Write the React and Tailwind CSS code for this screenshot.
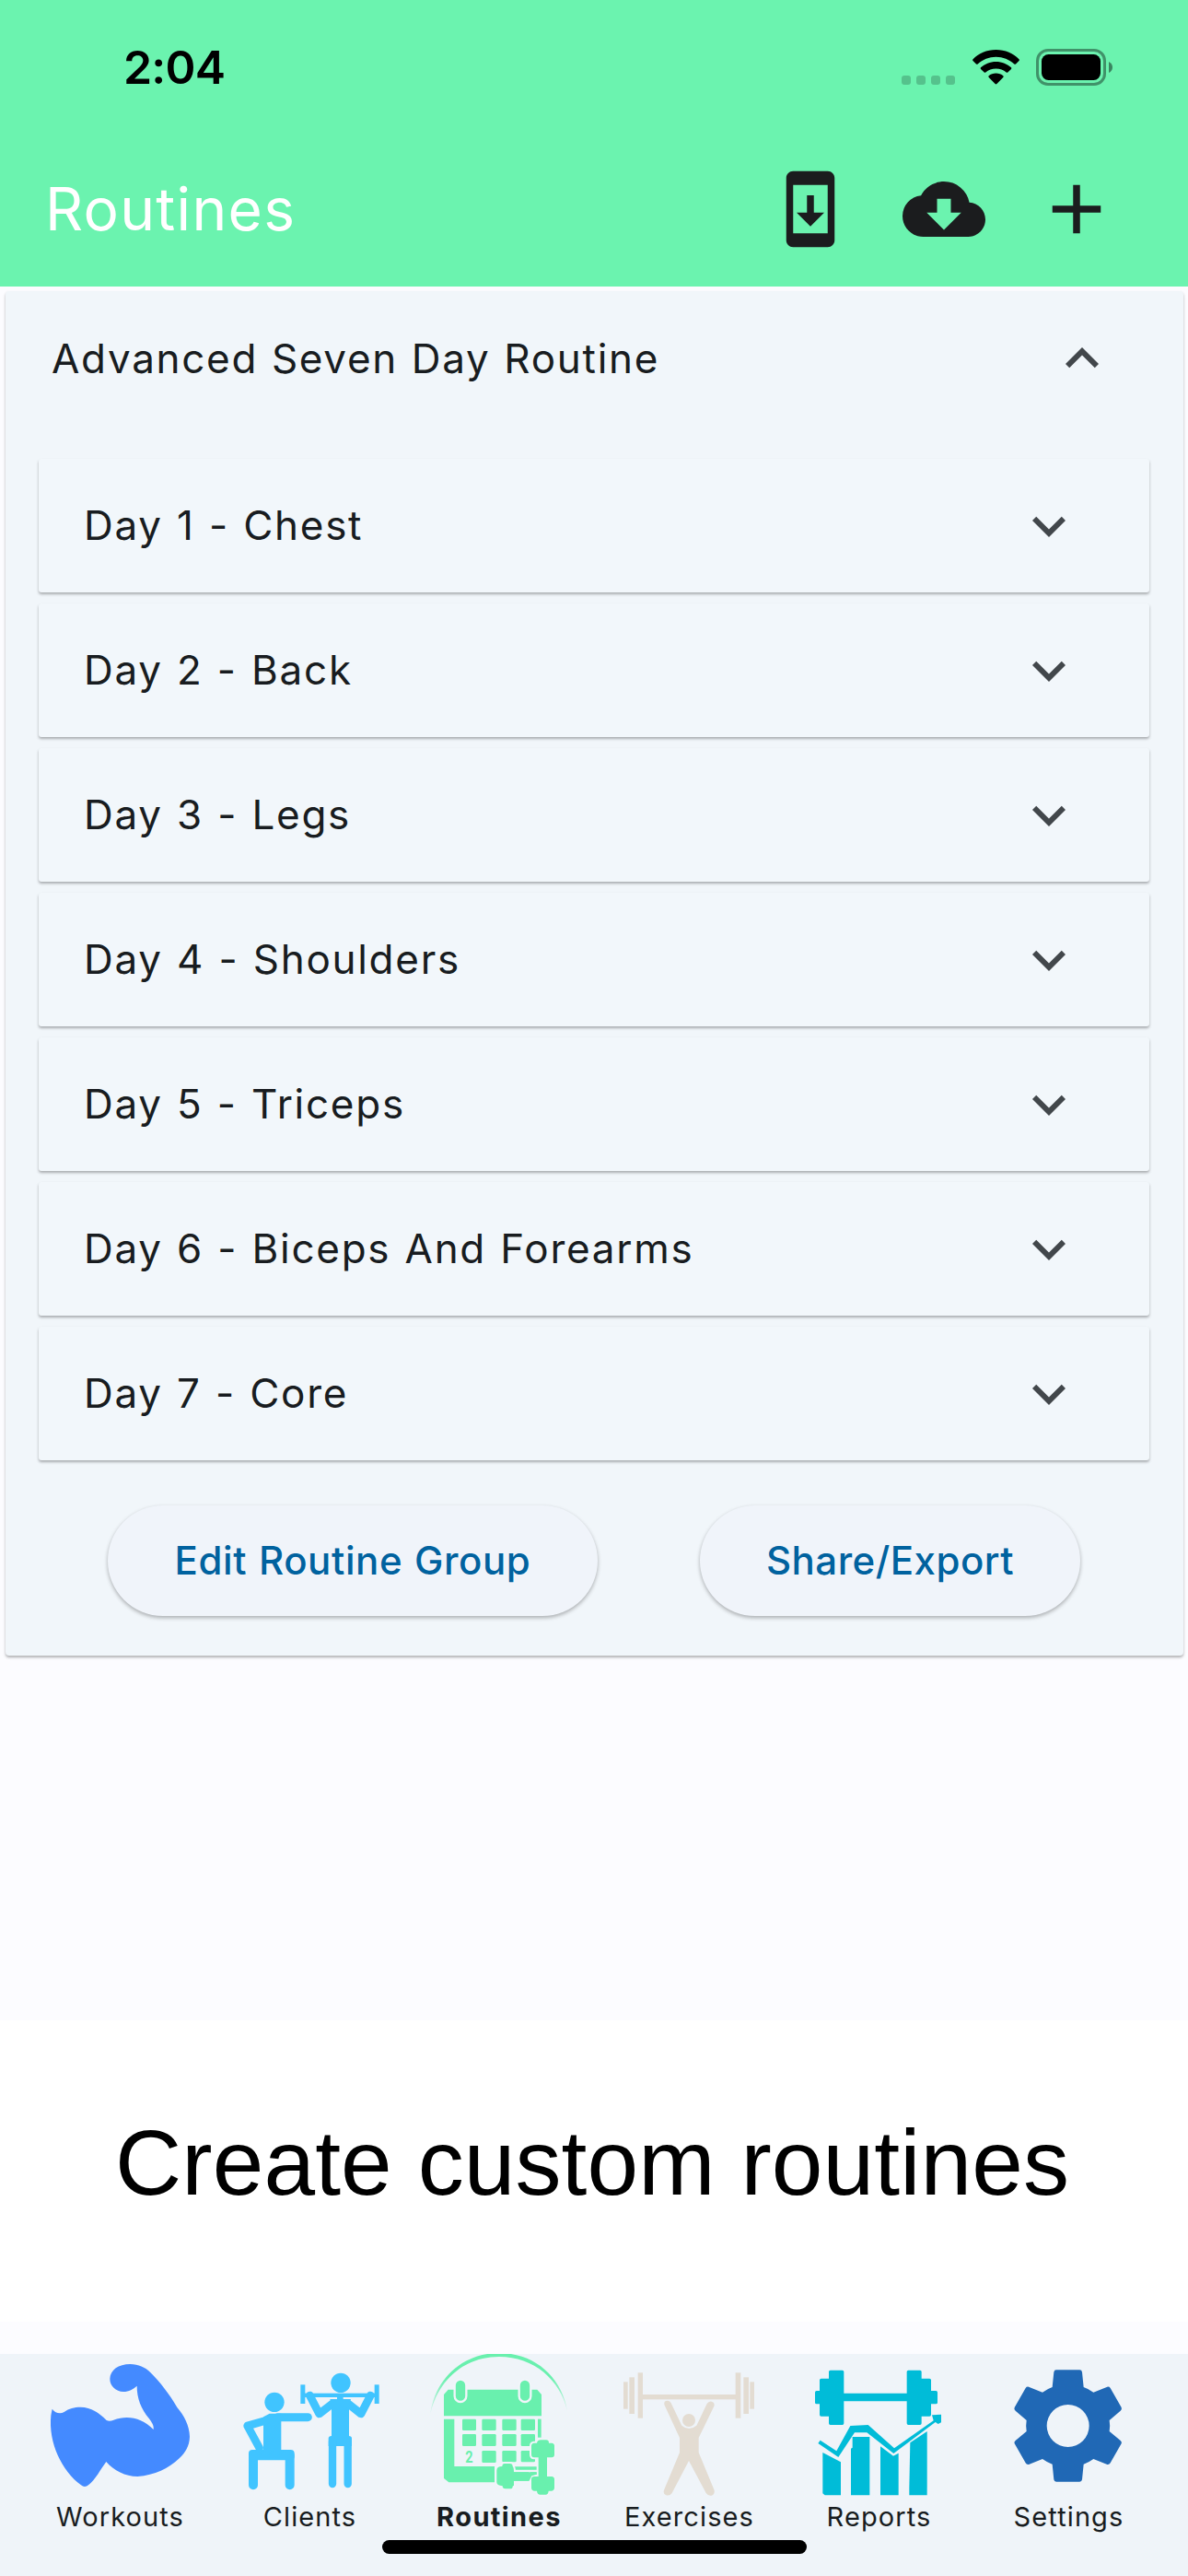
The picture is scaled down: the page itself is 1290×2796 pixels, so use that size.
import React from 'react';
import { MdAdd, MdCloudDownload, MdExpandLess, MdExpandMore, MdSystemUpdate } from 'react-icons/md';

const days = [
    'Day 1 - Chest',
    'Day 2 - Back',
    'Day 3 - Legs',
    'Day 4 - Shoulders',
    'Day 5 - Triceps',
    'Day 6 - Biceps And Forearms',
    'Day 7 - Core',
];

const WorkoutsIcon = () => (
    <svg viewBox="81 45 618 480" className="w-[206px] h-[160px] text-[#448aff]" fill="currentColor">
        <path d="M170 224C180 237 195 242 209 234C225 222 242 218 262 218C298 219 323 236 347 261Q357 266 370 260C416 243 462 253 500 291C502 279 495 268 486 256C459 222 446 190 446 149C434 160 420 168 402 168C377 167 358 150 358 126C359 97 386 78 424 78C452 79 472 88 489 104C520 134 553 177 577 219C600 246 617 278 618 314C617 345 604 366 584 385C549 418 505 440 448 444C408 444 371 425 346 396C328 420 310 456 288 472Q276 482 264 472C202 425 157 335 166 245Z" />
    </svg>
);

const ClientsIcon = () => (
    <svg viewBox="699 45 618 480" className="w-[206px] h-[160px] text-[#40c4ff]" fill="none" stroke="currentColor" strokeLinecap="round" strokeLinejoin="round">
        <g fill="currentColor" stroke="none">
            <circle cx="894" cy="202" r="32" />
            <path d="M858 250L878 239H916V360H858Z" />
            <rect x="810" y="357" width="149" height="34" rx="12" />
            <circle cx="1110" cy="139" r="32" />
            <path d="M1075 192H1098V183H1118V192H1143L1137 210V314H1080V210Z" />
            <path d="M1070 320Q1070 312 1080 312H1136Q1146 312 1146 320V345H1070Z" />
            <rect x="979" y="145" width="15" height="62" />
            <rect x="1220" y="145" width="15" height="62" />
            <rect x="985" y="173" width="242" height="13" />
        </g>
        <path d="M825 374V472M944 374V472" strokeWidth="30" />
        <path d="M905 251H1003" strokeWidth="27" />
        <path d="M865 262L806 279L845 351" strokeWidth="26" />
        <path d="M1083 330V468M1133 330V468" strokeWidth="25" />
        <path d="M1009 180L1040 240L1084 206M1207 180L1176 240L1133 206" strokeWidth="26" />
    </svg>
);

const RoutinesIcon = () => (
    <svg viewBox="27 45 618 480" className="w-[206px] h-[160px] text-[#69f0ae]" fill="currentColor">
        <defs>
            <linearGradient id="arc" x1="0" y1="0" x2="0" y2="1">
                <stop offset="0.4" stopColor="#69f0ae" />
                <stop offset="1" stopColor="#69f0ae" stopOpacity="0.2" />
            </linearGradient>
        </defs>
        <path d="M112 240C128 122 220 42 336 42C454 42 540 122 558 230C535 130 450 54 336 54C224 54 138 128 112 240Z" fill="url(#arc)" />
        <path d="M170 161H460L474 177V247H156V177Z" />
        <path d="M156 257H190V411H321V463H172L156 450Z" />
        <rect x="462" y="257" width="11" height="60" />
        <g stroke="#f1f5fa" strokeWidth="7">
            <rect x="191" y="128" width="38" height="73" rx="19" />
            <rect x="401" y="128" width="38" height="73" rx="19" />
        </g>
        <rect x="216" y="257" width="45" height="37" rx="4" />
        <rect x="280" y="257" width="46" height="37" rx="4" />
        <rect x="346" y="257" width="46" height="37" rx="4" />
        <rect x="407" y="257" width="46" height="37" rx="4" />
        <rect x="216" y="306" width="45" height="39" rx="4" />
        <rect x="280" y="306" width="46" height="39" rx="4" />
        <rect x="346" y="306" width="46" height="39" rx="4" />
        <rect x="407" y="306" width="46" height="39" rx="4" />
        <rect x="280" y="360" width="46" height="39" rx="4" />
        <rect x="346" y="360" width="46" height="37" rx="4" />
        <rect x="407" y="360" width="46" height="37" rx="4" />
        <text x="238" y="399" textAnchor="middle" fontSize="54" textLength="25" lengthAdjust="spacingAndGlyphs" className="font-['Roboto',sans-serif] font-bold">2</text>
        <path d="M384 412H460V422H384ZM384 430H460V440H384Z" />
        <g stroke="#f1f5fa" strokeWidth="12" paintOrder="stroke">
            <path d="M346 411Q346 402 354 402H371Q380 402 380 411Q384 413 384 430H432V458H384V474Q380 474 380 477Q380 484 372 484H356Q347 484 347 475Q328 473 328 463V424Q328 411 346 411Z" />
            <path d="M459 335Q461 325 472 325H489Q498 325 498 335H507Q516 336 516 344V373Q516 382 507 382H492V444H507Q516 445 516 453V481Q516 490 507 491H497Q496 503 487 503H470Q460 503 459 491H450Q441 490 441 481V453Q441 444 450 444H464V382H450Q441 382 441 373V344Q441 336 450 335Z" />
        </g>
        <path d="M384 430H458V437L442 442L434 458H384Z" />
    </svg>
);

const ExercisesIcon = () => (
    <svg viewBox="645 45 618 480" className="w-[206px] h-[160px] text-[#e3dcd2]" fill="currentColor">
        <rect x="741" y="136" width="14" height="88" />
        <rect x="760" y="121" width="17" height="119" />
        <rect x="788" y="106" width="16" height="148" />
        <rect x="804" y="177" width="303" height="16" />
        <rect x="1106" y="106" width="17" height="148" />
        <rect x="1132" y="121" width="17" height="119" />
        <rect x="1153" y="136" width="14" height="88" />
        <circle cx="954" cy="261" r="21" />
        <path d="M875 212Q870 198 884 197Q892 196 896 205L931 278Q954 298 979 278L1013 207Q1019 197 1029 200Q1040 204 1036 215L986 318V366L1037 489Q1039 502 1028 506Q1017 508 1010 498L954 393L899 498Q892 508 880 505Q869 500 873 488L924 366V318Z" />
    </svg>
);

const ReportsIcon = () => (
    <svg viewBox="-27 45 618 480" className="w-[206px] h-[160px] text-[#00bcd8]" fill="currentColor">
        <path d="M120 103Q120 98 125 98H164Q169 98 169 103V173H374V103Q374 98 379 98H417Q422 98 422 103V125H448Q453 125 453 130V165H469Q474 165 474 170V203Q474 208 469 208H453V243Q453 248 448 248H422V271Q422 276 417 276H379Q374 276 374 271V199H169V271Q169 276 164 276H125Q120 276 120 271V248H95Q90 248 90 243V208H80Q75 208 75 203V170Q75 165 80 165H90V130Q90 125 95 125H120Z" />
        <path d="M100 366L159 397V505H107L100 499Z" />
        <path d="M197 315H253V505H192V353L197 350Z" />
        <path d="M288 346L330 377L347 368V505H288Z" />
        <path d="M440 297V505H382V480L385 334Z" />
        <path d="M92 326L145 361L190 279L248 276L333 352L461 262L456 244L486 242V268L476 273L467 267L331 369L244 301H204L151 381L85 336Z" />
    </svg>
);

const SettingsIcon = () => (
    <svg viewBox="591 45 618 480" className="w-[206px] h-[160px] text-[#2068b5]" fill="currentColor">
        <path fillRule="evenodd" d="M861 97H937Q944 97 945 104L950 153Q967 159 982 170L1027 152Q1034 151 1037 156L1073 219Q1076 225 1070 230L1034 261Q1037 279 1034 297L1070 327Q1076 332 1073 337L1037 400Q1034 406 1027 405L982 387Q967 398 950 404L945 454Q944 461 937 461H861Q854 461 853 454L848 404Q831 398 816 387L771 405Q764 406 761 400L725 337Q722 332 728 327L764 297Q761 279 764 261L728 230Q722 225 725 219L761 156Q764 151 771 152L816 170Q831 159 848 153L853 104Q854 97 861 97ZM899 210A69 69 0 1 0 899 348A69 69 0 1 0 899 210Z" />
    </svg>
);

const tabs = [
    { label: 'Workouts', Icon: WorkoutsIcon },
    { label: 'Clients', Icon: ClientsIcon },
    { label: 'Routines', Icon: RoutinesIcon, active: true },
    { label: 'Exercises', Icon: ExercisesIcon },
    { label: 'Reports', Icon: ReportsIcon },
    { label: 'Settings', Icon: SettingsIcon },
];

const StatusBar = () => (
    <div className="h-[141px] pl-[134px] pr-[81px] pt-[5px] flex items-center justify-between text-black">
        <span className="text-[50px] leading-none font-semibold tracking-[-0.8px]">2:04</span>
        <div className="flex items-center">
            <div className="flex gap-[6px] mt-[28px] mr-[19px]">
                {[0, 1, 2, 3].map(i => (
                    <span key={i} className="w-[10px] h-[10px] rounded-[3px] bg-black/20" />
                ))}
            </div>
            <svg viewBox="0 0 51 38" className="w-[51px] h-[38px] mr-[18px]">
                <path d="M25.5 0C35.500 0 44.500 4 50.500 10.300Q51.200 11.200 50.500 12L47 15.500Q46.200 16.200 45.300 15.500C40 10.500 33 7.700 25.500 7.700S11 10.500 5.700 15.500Q4.800 16.200 4 15.500L.5 12Q-.2 11.200 .5 10.300C6.500 4 15.500 0 25.500 0Z" />
                <path d="M25.500 13C32 13 37.800 15.500 42 19.300Q42.800 20.100 42 21L38.300 24.500Q37.500 25.200 36.700 24.500C33.700 21.900 29.800 20.500 25.500 20.500S17.300 21.900 14.300 24.500Q13.500 25.200 12.700 24.500L9 21Q8.200 20.100 9 19.300C13.200 15.500 19 13 25.500 13Z" />
                <path d="M25.500 25.500C28.500 25.500 31.300 26.500 33.300 28.300Q34.200 29.100 33.300 30L26.400 37.100Q25.500 38 24.600 37.100L17.700 30Q16.800 29.100 17.700 28.300C19.700 26.500 22.500 25.500 25.500 25.500Z" />
            </svg>
            <svg viewBox="0 0 84 40" className="w-[84px] h-[40px]">
                <rect x="1.500" y="1.500" width="73" height="37" rx="11.500" fill="none" stroke="#000" strokeOpacity="0.4" strokeWidth="3" />
                <rect x="6" y="6" width="64" height="28" rx="7.500" />
                <path d="M79 14Q83 16 83 20T79 26Z" fillOpacity="0.45" />
            </svg>
        </div>
    </div>
);

const App = () => {
    return (
        <div className="w-[1290px] h-[2796px] flex flex-col overflow-hidden bg-[#fcfcff] font-['Inter',sans-serif] text-[#181c20]">
            <header className="h-[311px] shrink-0 bg-[#6bf3af]">
                <StatusBar />
                <div className="h-[170px] pl-[49px] pr-[76px] pt-[1px] flex items-center justify-between">
                    <h1 className="text-[64px] leading-none text-white tracking-[1.3px] font-normal">Routines</h1>
                    <div className="flex items-center gap-[54.500px] text-[#1b1c1e]">
                        <MdSystemUpdate size={90} />
                        <MdCloudDownload size={90} />
                        <MdAdd size={90} />
                    </div>
                </div>
            </header>

            <section className="mt-[5px] ml-[6px] mr-[5px] h-[1481px] shrink-0 rounded-[4px] bg-[#f1f6fa] pl-[36px] pr-[37px] shadow-[0_2px_3px_rgba(0,0,0,0.3)]">
                <div className="h-[146px] pl-[14px] pr-[37px] flex items-center justify-between">
                    <span className="text-[44px] leading-none tracking-[1.7px] [word-spacing:0.8px]">Advanced Seven Day Routine</span>
                    <MdExpandLess size={72} className="text-[#42474b]" />
                </div>

                <div className="mt-9 flex flex-col gap-3">
                    {days.map(day => (
                        <div key={day} className="h-[145px] pl-[49px] pr-[73px] flex items-center justify-between rounded-[3px] bg-[#f2f7fb] shadow-[0_2px_3px_rgba(0,0,0,0.3)]">
                            <span className="pb-[2px] text-[44px] leading-none tracking-[1.72px] [word-spacing:1.2px]">{day}</span>
                            <MdExpandMore size={72} className="text-[#42474b]" />
                        </div>
                    ))}
                </div>

                <div className="mt-[49px] pl-[75px] flex gap-[111px] text-[42px] font-medium text-[#00629f]">
                    <button className="w-[532px] h-[120px] pb-[2px] rounded-full bg-[#f0f4fa] tracking-[0.6px] [word-spacing:1px] shadow-[0_2px_4px_rgba(0,0,0,0.3)]">Edit Routine Group</button>
                    <button className="w-[413px] h-[120px] pb-[2px] rounded-full bg-[#f0f4fa] tracking-[0.5px] shadow-[0_2px_4px_rgba(0,0,0,0.3)]">Share/Export</button>
                </div>
            </section>

            <div className="mt-[396px] h-[327px] shrink-0 bg-white flex items-center justify-center">
                <p className="font-['Liberation_Sans',Arial,sans-serif] text-[100px] leading-none tracking-[0.1px] text-black pr-[4px] pb-[20px]">Create custom routines</p>
            </div>

            <nav className="mt-[35px] h-[241px] shrink-0 bg-[#eff4f9] flex flex-col items-center">
                <div className="flex h-[202px]">
                    {tabs.map(({ label, Icon, active }) => (
                        <div key={label} className="w-[206px] flex flex-col items-center">
                            <Icon />
                            <span className={active ? 'text-[29px] leading-[33px] tracking-[1.4px] font-bold' : 'pl-[1px] text-[29px] leading-[33px] tracking-[1.1px]'}>
                                {label}
                            </span>
                        </div>
                    ))}
                </div>
                <div className="w-[461px] h-[15px] rounded-full bg-black" />
            </nav>
        </div>
    );
};

export default App;
